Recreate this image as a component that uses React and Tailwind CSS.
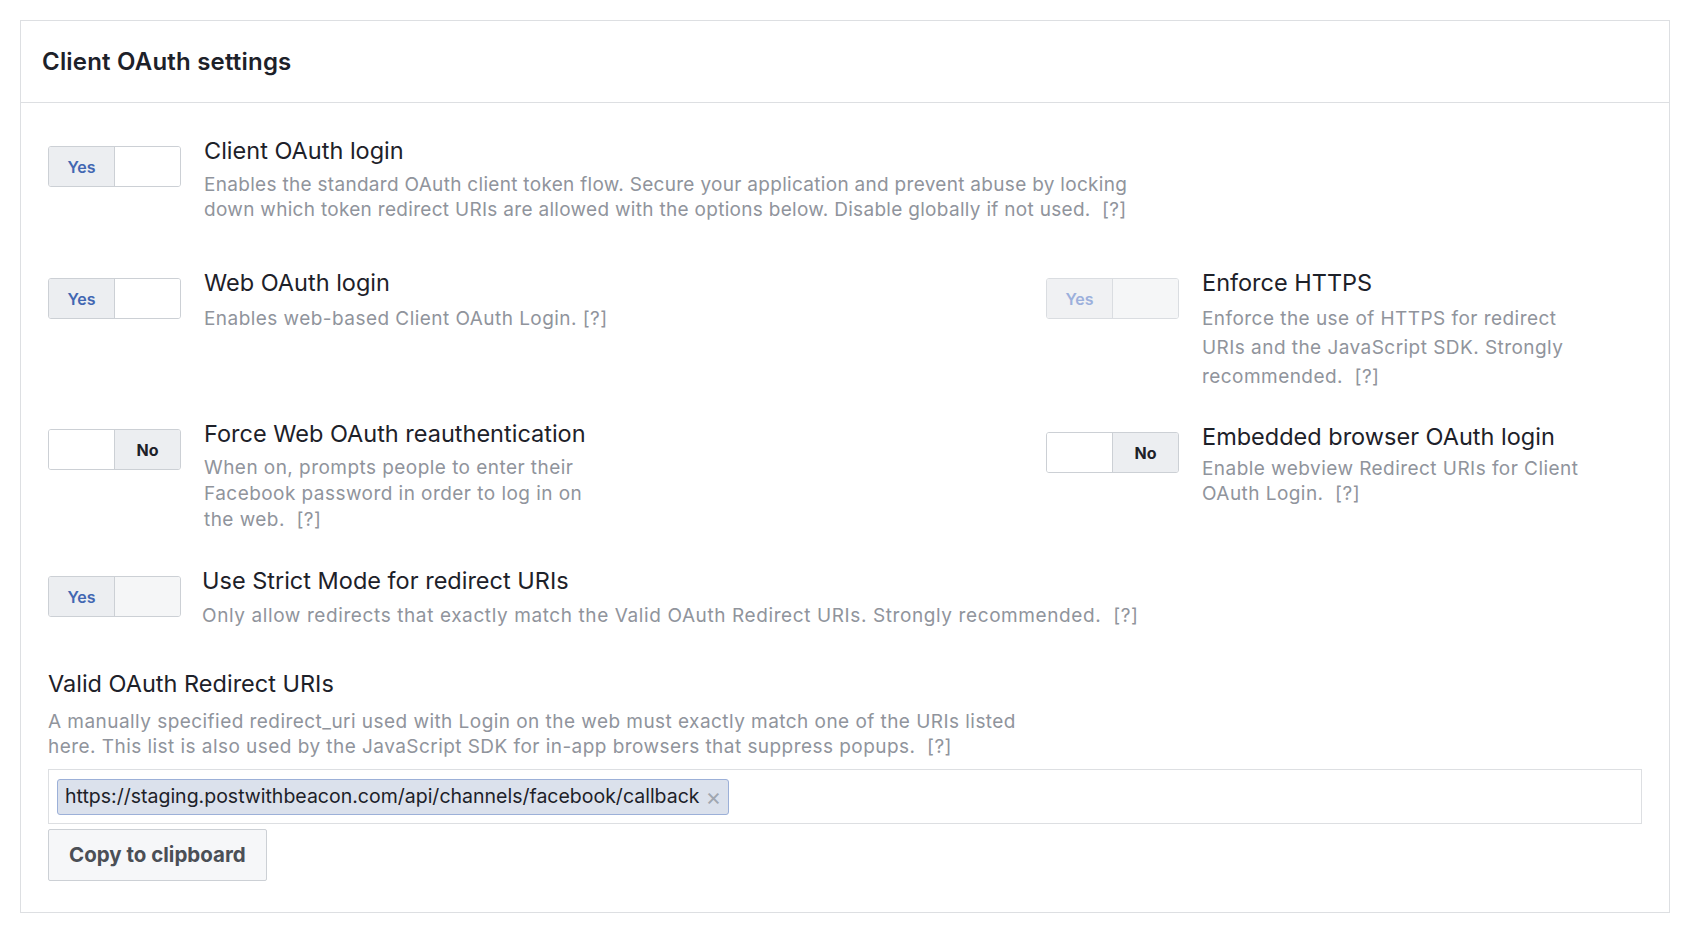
import React from 'react';

const Toggle = ({ value = true, disabled = false, muted = false }) => {
    if (!value) {
        return (
            <div className="flex h-[41px] w-[133px] shrink-0 overflow-hidden rounded-[3px] border border-[#ccd0d5]">
                <div className="w-[66px] border-r border-[#ccd0d5] bg-white" />
                <div className="flex flex-1 items-center justify-center bg-[#eceef1] text-[16px] font-bold text-[#1d2129]">No</div>
            </div>
        );
    }
    return (
        <div className={`flex h-[41px] w-[133px] shrink-0 overflow-hidden rounded-[3px] border ${disabled ? 'border-[#dadde1]' : 'border-[#ccd0d5]'}`}>
            <div className={`flex w-[66px] items-center justify-center border-r text-[16px] font-semibold ${disabled ? 'border-[#dadde1] bg-[#f0f1f3] text-[#9cb0dc]' : 'border-[#ccd0d5] bg-[#eceef1] text-[#4267b2]'}`}>
                Yes
            </div>
            <div className={`flex-1 ${disabled || muted ? 'bg-[#f5f6f7]' : 'bg-white'}`} />
        </div>
    );
};

const Setting = ({ title, toggle, children, descClass = 'leading-[25px]', tracking = 'tracking-[0.45px]', gapClass = 'mt-[7px]', className = '' }) => (
    <div className={`flex items-start gap-[23px] ${className}`}>
        <div className="mt-[9px]">{toggle}</div>
        <div>
            <div className="text-[23.5px] leading-[28px] text-[#1d2129]">{title}</div>
            <div className={`${gapClass} ${tracking} text-[19px] text-[#90949c] ${descClass}`}>{children}</div>
        </div>
    </div>
);

export default function App() {
    return (
        <div className="min-h-[931px] bg-white p-[20px]" style={{ fontFamily: 'Inter, "Noto Sans", sans-serif' }}>
            <div className="border border-[#dddfe2] bg-white">
                {/* header */}
                <div className="flex h-[82px] items-center border-b border-[#dddfe2] px-[21px]">
                    <h2 className="text-[24px] font-semibold tracking-[0.2px] text-[#1d2129]">Client OAuth settings</h2>
                </div>

                <div className="px-[27px] pb-[31px] pt-[34px]">
                    <Setting title="Client OAuth login" toggle={<Toggle />} descClass="max-w-[960px] leading-[25px]" tracking="tracking-[0.3px]">
                        Enables the standard OAuth client token flow. Secure your application and prevent abuse by locking down which token redirect URIs are allowed with the options below. Disable globally if not used.&nbsp; [?]
                    </Setting>

                    <div className="mt-[47px] grid grid-cols-[998px_1fr] gap-y-[29px]">
                        <Setting title="Web OAuth login" toggle={<Toggle />} gapClass="mt-[9px]">
                            Enables web-based Client OAuth Login. [?]
                        </Setting>
                        <Setting title="Enforce HTTPS" toggle={<Toggle disabled />} descClass="max-w-[392px] leading-[29px]">
                            Enforce the use of HTTPS for redirect URIs and the JavaScript SDK. Strongly recommended.&nbsp; [?]
                        </Setting>
                        <Setting title="Force Web OAuth reauthentication" toggle={<Toggle value={false} />} descClass="max-w-[395px] leading-[26px]">
                            When on, prompts people to enter their Facebook password in order to log in on the web.&nbsp; [?]
                        </Setting>
                        <Setting title="Embedded browser OAuth login" toggle={<Toggle value={false} />} descClass="max-w-[392px] leading-[25px]" gapClass="mt-[5px]" className="mt-[3px]">
                            Enable webview Redirect URIs for Client OAuth Login.&nbsp; [?]
                        </Setting>
                    </div>

                    <Setting title="Use Strict Mode for redirect URIs" toggle={<Toggle muted />} className="mt-[34px] !gap-[21px]" gapClass="mt-[8px]" tracking="tracking-[0.6px]">
                        Only allow redirects that exactly match the Valid OAuth Redirect URIs. Strongly recommended.&nbsp; [?]
                    </Setting>

                    {/* redirect uris */}
                    <div className="mt-[42px]">
                        <div className="text-[23.5px] leading-[28px] text-[#1d2129]">Valid OAuth Redirect URIs</div>
                        <div className="mt-[11px] max-w-[990px] text-[19px] leading-[25px] tracking-[0.45px] text-[#90949c]">
                            A manually specified redirect_uri used with Login on the web must exactly match one of the URIs listed here. This list is also used by the JavaScript SDK for in-app browsers that suppress popups.&nbsp; [?]
                        </div>
                        <div className="mt-[10px] flex h-[55px] items-center border border-[#dddfe2] bg-white px-[8px]">
                            <span className="flex h-[36px] items-center gap-[6px] rounded-[3px] border border-[#9cb0d8] bg-[#dbe1ec] px-[7px] text-[19.5px] text-[#1d2129]">
                                https://staging.postwithbeacon.com/api/channels/facebook/callback
                                <span className="text-[24px] leading-none text-[#a0a6b0]">×</span>
                            </span>
                        </div>
                        <button className="mt-[5px] h-[52px] rounded-[2px] border border-[#ccd0d5] bg-[#f6f7f9] px-[20px] text-[20.5px] font-bold text-[#4b4f56]">
                            Copy to clipboard
                        </button>
                    </div>
                </div>
            </div>
        </div>
    );
}
